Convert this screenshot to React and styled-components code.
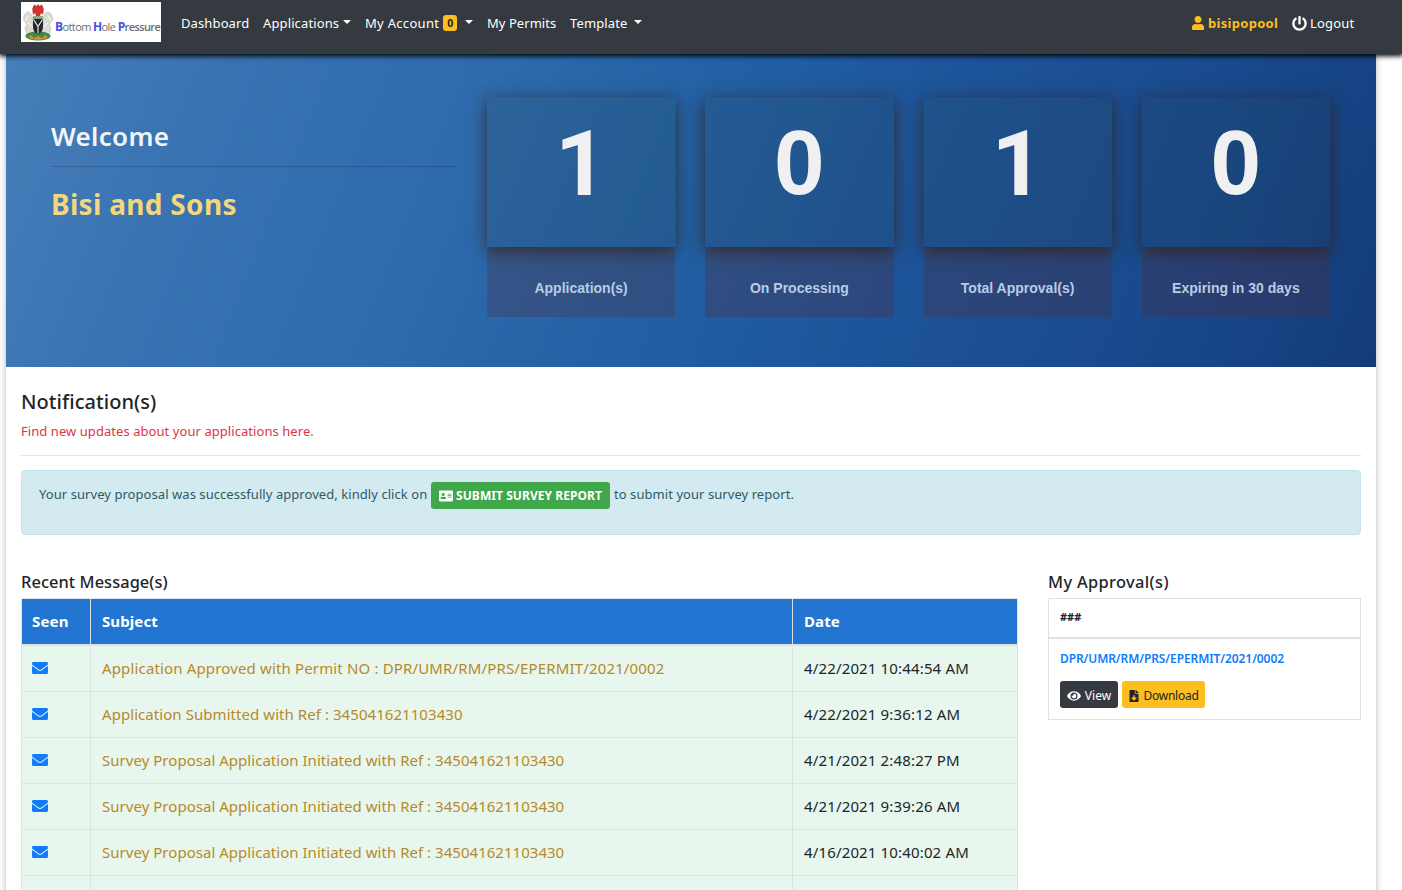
import React from "react";
import styled, { createGlobalStyle } from "styled-components";
import { FaUser, FaPowerOff, FaAddressCard, FaEnvelope, FaEye, FaFileDownload } from "react-icons/fa";

const GlobalStyle = createGlobalStyle`
  *, *::before, *::after { box-sizing: border-box; }
  html, body { margin: 0; height: 890px; overflow: hidden; background: #fff; }
  body { font-family: "Noto Sans", "Open Sans", sans-serif; color: #212529; }
  svg { display: block; flex: none; }
`;

const Page = styled.div`
  height: 890px;
  display: flex;
  flex-direction: column;
  overflow: hidden;
`;

/* ---------- navigation ---------- */
const Navbar = styled.nav`
  position: relative;
  z-index: 5;
  flex: none;
  height: 54px;
  padding: 2px 48px 0 21px;
  display: flex;
  align-items: flex-start;
  background: #343a40;
  box-shadow: 0 1px 5px 1px #000;
`;
const Logo = styled.div`
  display: flex;
  width: 140px;
  height: 40px;
  margin-right: 20px;
  background: #fff;
`;
const Wordmark = styled.span`
  padding-top: 16px;
  font-family: "Open Sans", sans-serif;
  font-size: 11px;
  line-height: 17px;
  letter-spacing: -0.6px;
  white-space: nowrap;
  color: #6c6d74;
  b { font-size: 12px; color: #4650dc; }
  i { font-style: normal; font-weight: 600; }
`;
const NavList = styled.div`
  display: flex;
  gap: 14px;
  height: 42px;
  align-items: center;
`;
const NavItem = styled.a`
  display: flex;
  align-items: center;
  width: ${(p) => p.$w}px;
  white-space: nowrap;
  font-size: 13px;
  font-weight: ${(p) => (p.$strong ? 700 : 450)};
  letter-spacing: ${(p) => p.$ls || 0.12}px;
  color: ${(p) => (p.$strong ? "#fdbe1f" : "#fff")};
  svg { margin-right: 3px; }
`;
const Caret = styled.i`
  margin-left: auto;
  margin-top: -3px;
  border: 4px solid transparent;
  border-top-color: #fff;
  border-bottom: 0;
`;
const Badge = styled.b`
  width: 14px;
  height: 16px;
  margin-left: 4px;
  border-radius: 3px;
  background: #fdbe1f;
  color: #212529;
  font-size: 10.5px;
  line-height: 16px;
  letter-spacing: 0;
  text-align: center;
`;
const UserNav = styled(NavList)`
  margin-left: auto;
`;

/* ---------- hero ---------- */
const Container = styled.main`
  width: 1370px;
  margin-left: 6px;
  flex: 1;
  background: #fff;
  box-shadow: 0 0 6px rgba(0, 0, 0, 0.3);
`;
const Hero = styled.section`
  height: 313px;
  padding: 43px 46px 0 45px;
  display: flex;
  gap: 31px;
  background: linear-gradient(112deg, #477fb9 0%, #3973b2 14%, #2f6bad 32%, #2361a4 48%, #1d5499 65%, #194a8d 82%, #164383 92%, #143a79 100%);
`;
const Greeting = styled.div`
  width: 405px;
  padding-top: 21px;
`;
const Welcome = styled.h3`
  margin: 0;
  height: 49px;
  line-height: 36px;
  font-size: 26px;
  font-weight: 600;
  letter-spacing: 0.3px;
  color: #f2f4f7;
  border-bottom: 1px solid rgba(0, 0, 0, 0.16);
`;
const Company = styled.h2`
  margin: 18px 0 0;
  line-height: 38px;
  font-size: 28px;
  font-weight: 700;
  letter-spacing: 0.3px;
  color: #f3d77a;
`;
const Stats = styled.div`
  flex: 1;
  display: grid;
  grid-template-columns: repeat(4, 1fr);
  gap: 30px;
  font-family: "Liberation Sans", Arial, sans-serif;
  font-weight: 700;
  text-align: center;
`;
const StatValue = styled.div`
  position: relative;
  height: 150px;
  padding-top: ${(p) => (p.$plainOne ? 15 : 14)}px;
  font-family: ${(p) => (p.$plainOne ? "Roboto, sans-serif" : "inherit")};
  font-size: 91px;
  line-height: 104px;
  color: #f0f0f0;
`;
const StatShade = styled.div`
  position: relative;
  height: 150px;
  background: rgba(40, 60, 50, 0.14);
`;
const StatLabel = styled.div`
  height: 70px;
  padding: 5px 0 0 0;
  font-size: 14px;
  line-height: 72px;
  color: #b9cce5;
  background: rgba(84, 44, 60, 0.3);
`;
/* The shadow is clipped out from beneath the translucent card. */
const StatShadow = styled.div`
  position: absolute;
  inset: 0;
  box-shadow: 0 4px 16px rgba(52, 30, 14, 0.78);
  clip-path: path(evenodd, "M-30 -30H220V190H-30Z M0 0H188.4V150H0Z");
`;

/* ---------- notifications ---------- */
const Content = styled.section`
  padding: 19px 15px 0;
`;
const Title = styled.h4`
  margin: 0;
  line-height: 32px;
  font-size: 20px;
  font-weight: 500;
  letter-spacing: 0.05px;
`;
const Hint = styled.p`
  margin: 0;
  height: 38px;
  padding-top: 3px;
  line-height: 20px;
  font-size: 13px;
  letter-spacing: 0.06px;
  color: #dc3545;
  border-bottom: 1px solid #e4e4e4;
`;
const Alert = styled.div`
  margin-top: 14px;
  height: 65px;
  padding: 11px 17px;
  display: flex;
  align-items: flex-start;
  gap: 4px;
  border: 1px solid #bee5eb;
  border-radius: 4px;
  background: #d3ebf0;
  color: #2c5a63;
  font-size: 13px;
  line-height: 25px;
  letter-spacing: 0.06px;
  white-space: nowrap;
`;
const AlertText = styled.span`
  width: ${(p) => p.$w}px;
`;
const Button = styled.button`
  width: ${(p) => p.$w}px;
  height: 27px;
  padding: ${(p) => (p.$weight ? 0 : 2)}px 0 0;
  display: flex;
  align-items: center;
  justify-content: center;
  gap: ${(p) => p.$gap || 3}px;
  border: 0;
  border-radius: 3px;
  background: ${(p) => p.$bg};
  color: ${(p) => p.$color || "#fff"};
  font-family: inherit;
  font-size: 12px;
  font-weight: ${(p) => p.$weight || 400};
  letter-spacing: ${(p) => p.$ls || 0}px;
  white-space: nowrap;
`;

/* ---------- lower columns ---------- */
const Columns = styled.div`
  display: flex;
  gap: 30px;
  margin-top: 33px;
`;
const Messages = styled.div`
  width: 997px;
`;
const Approvals = styled.div`
  width: 313px;
`;
const Heading = styled.h5`
  margin: 0;
  height: 30px;
  line-height: 27px;
  font-size: 16.4px;
  font-weight: 500;
  letter-spacing: ${(p) => p.$ls}px;
`;
const Table = styled.div`
  border: 1px solid #dee2e6;
  border-width: 1px 0 0 1px;
  font-size: 15px;
`;
const Row = styled.div`
  display: grid;
  grid-template-columns: 69px 702px 225px;
  height: ${(p) => (p.$head ? 47 : 46)}px;
  line-height: 22px;
  background: ${(p) => (p.$head ? "#2276d2" : "#e7f7ed")};
  color: ${(p) => (p.$head ? "#fff" : "#212529")};
  font-weight: ${(p) => (p.$head ? 700 : 400)};
`;
const Cell = styled.div`
  display: flex;
  align-items: center;
  padding: 0 0 2px ${(p) => p.$pad || 11}px;
  border-right: 1px solid #dee2e6;
  border-bottom: ${(p) => (p.$head ? 2 : 1)}px solid #dee2e6;
  color: ${(p) => p.$color || "inherit"};
  letter-spacing: ${(p) => p.$ls || 0}px;
  white-space: nowrap;
`;
const ApprovalBox = styled.div`
  border: 1px solid #dee2e6;
`;
const ApprovalHead = styled.div`
  height: 40px;
  padding-left: 11px;
  border-bottom: 2px solid #dee2e6;
  font-size: 11px;
  font-weight: 700;
  line-height: 36px;
`;
const ApprovalBody = styled.div`
  height: 80px;
  padding: 10px 11px 0;
`;
const PermitLink = styled.a`
  display: block;
  height: 32px;
  line-height: 19px;
  font-size: 12px;
  font-weight: 600;
  letter-spacing: -0.09px;
  color: #127bfb;
  white-space: nowrap;
`;
const Actions = styled.div`
  display: flex;
  gap: 4px;
`;

const stats = [
  ["1", "Application(s)"],
  ["0", "On Processing"],
  ["1", "Total Approval(s)"],
  ["0", "Expiring in 30 days"],
];
const initiated = "Survey Proposal Application Initiated with Ref : 345041621103430";
const messages = [
  ["Application Approved with Permit NO : DPR/UMR/RM/PRS/EPERMIT/2021/0002", "4/22/2021 10:44:54 AM", 0.15],
  ["Application Submitted with Ref : 345041621103430", "4/22/2021 9:36:12 AM", 0.06],
  [initiated, "4/21/2021 2:48:27 PM", 0.03],
  [initiated, "4/21/2021 9:39:26 AM", 0.03],
  [initiated, "4/16/2021 10:40:02 AM", 0.03],
];

const Emblem = () => (
  <svg width="34" height="40" viewBox="0 0 34 40">
    <g fill="#dddcd2" stroke="#b5b3a8" strokeWidth=".6">
      <path d="M5 11c2-2 4-1 5 1l3 7-1 4 2 8-8 1-2-5 2-5-3-3c-1-3 0-6 2-8Z" />
      <path d="M29 11c-2-2-4-1-5 1l-3 7 1 4-2 8 8 1 2-5-2-5 3-3c1-3 0-6-2-8Z" />
    </g>
    <path d="M7 14l-3 5m3 2 5 4M27 14l3 5m-3 2-5 4" stroke="#fff" strokeWidth="1" />
    <ellipse cx="17" cy="34" rx="12.5" ry="4.6" fill="#3d8a47" />
    <path d="M7 35l3-2 3 3 4-2 4 2 3-3 3 2-3 2-7 1-7-1Z" fill="#d98a35" />
    <path d="M12 16.500h10v8c0 4-2 6.500-5 8-3-1.500-5-4-5-8Z" fill="#26292a" />
    <path d="M12.500 17.500l4.500 7v7m4.500-14-4.500 7" stroke="#f4f4f0" strokeWidth="1.1" fill="none" />
    <path d="M12 15h10" stroke="#6d9a5b" strokeWidth="1.6" />
    <path d="M17 2l1.500 2 2.500-1.500 1.800 4.500-.8 6-2-2-1 3h-4l-1-3-2 2-.8-6L13 2.500 15.500 4Z" fill="#cf3430" />
  </svg>
);

export default function App() {
  return (
    <Page>
      <GlobalStyle />
      <Navbar>
        <Logo>
          <Emblem />
          <Wordmark><b>B</b>ottom <b>H</b>ole <b>P</b><i>ressure</i></Wordmark>
        </Logo>
        <NavList>
          <NavItem $w={68}>Dashboard</NavItem>
          <NavItem $w={88}>Applications<Caret /></NavItem>
          <NavItem $w={108} $ls={0.3}>My Account<Badge>0</Badge><Caret /></NavItem>
          <NavItem $w={69} $ls={0.05}>My Permits</NavItem>
          <NavItem $w={72}>Template<Caret /></NavItem>
        </NavList>
        <UserNav>
          <NavItem $w={87} $strong $ls={0.3}>
            <FaUser size={14} />bisipopool
          </NavItem>
          <NavItem $w={62} $ls={0.2}>
            <FaPowerOff size={15} />Logout
          </NavItem>
        </UserNav>
      </Navbar>

      <Container>
        <Hero>
          <Greeting>
            <Welcome>Welcome</Welcome>
            <Company>Bisi and Sons</Company>
          </Greeting>
          <Stats>
            {stats.map(([value, label]) => (
              <div key={label}>
                <StatShade>
                  <StatShadow />
                  <StatValue $plainOne={value === "1"}>{value}</StatValue>
                </StatShade>
                <StatLabel>{label}</StatLabel>
              </div>
            ))}
          </Stats>
        </Hero>

        <Content>
          <Title>Notification(s)</Title>
          <Hint>Find new updates about your applications here.</Hint>
          <Alert>
            <AlertText $w={388}>Your survey proposal was successfully approved, kindly click on</AlertText>
            <Button $w={179} $bg="#40a74a" $weight={700} $ls={0.06}>
              <FaAddressCard size={14} />SUBMIT SURVEY REPORT
            </Button>
            <AlertText $w={180}>to submit your survey report.</AlertText>
          </Alert>

          <Columns>
            <Messages>
              <Heading $ls={0.07}>Recent Message(s)</Heading>
              <Table>
                <Row $head>
                  <Cell $head $pad={10} $ls={0.2}>Seen</Cell>
                  <Cell $head $ls={0.1}>Subject</Cell>
                  <Cell $head $ls={0.1}>Date</Cell>
                </Row>
                {messages.map(([subject, date, ls], i) => (
                  <Row key={i}>
                    <Cell $pad={10} $color="#127bfb"><FaEnvelope size={16} /></Cell>
                    <Cell $color="#b8892b" $ls={ls}>{subject}</Cell>
                    <Cell $ls={0.15}>{date}</Cell>
                  </Row>
                ))}
                <Row>
                  <Cell />
                  <Cell />
                  <Cell />
                </Row>
              </Table>
            </Messages>
            <Approvals>
              <Heading $ls={0.35}>My Approval(s)</Heading>
              <ApprovalBox>
                <ApprovalHead>###</ApprovalHead>
                <ApprovalBody>
                  <PermitLink>DPR/UMR/RM/PRS/EPERMIT/2021/0002</PermitLink>
                  <Actions>
                    <Button $w={58} $bg="#343a40" $ls={0.1} $gap={4}><FaEye size={14} />View</Button>
                    <Button $w={83} $bg="#fdbe1f" $color="#212529" $ls={-0.25}><FaFileDownload size={12} />Download</Button>
                  </Actions>
                </ApprovalBody>
              </ApprovalBox>
            </Approvals>
          </Columns>
        </Content>
      </Container>
    </Page>
  );
}
